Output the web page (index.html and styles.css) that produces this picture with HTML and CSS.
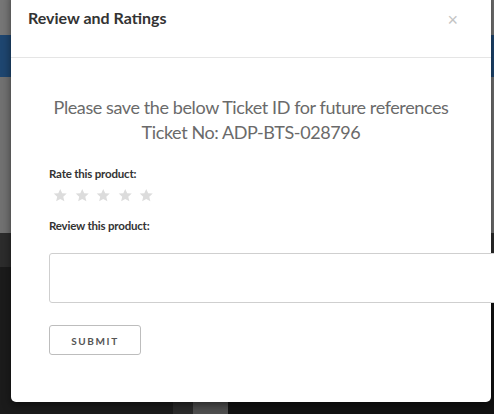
FILE: index.html
```html
<!DOCTYPE html>
<html lang="en">
<head>
<meta charset="utf-8">
<title>Review and Ratings</title>
<link rel="stylesheet" href="styles.css">
</head>
<body>
<div class="backdrop">
  <div class="band band-top"></div>
  <div class="band band-blue"></div>
  <div class="band band-mid"></div>
  <div class="band band-dark"></div>
  <div class="band band-bottom"></div>
</div>
<div class="modal">
  <div class="modal-header">
    <h4 class="modal-title">Review and Ratings</h4>
    <span class="close">&times;</span>
  </div>
  <div class="modal-body">
    <p class="message">Please save the below Ticket ID for future references<br>Ticket No: ADP-BTS-028796</p>
    <label class="field-label">Rate this product:</label>
    <div class="stars">
      <svg class="star" viewBox="0 0 24 24"><path d="M12 1.5l3.2 7.1 7.6.7-5.8 5.1 1.8 7.6L12 18l-6.8 4 1.8-7.6L1.2 9.3l7.6-.7z"/></svg>
      <svg class="star" viewBox="0 0 24 24"><path d="M12 1.5l3.2 7.1 7.6.7-5.8 5.1 1.8 7.6L12 18l-6.8 4 1.8-7.6L1.2 9.3l7.6-.7z"/></svg>
      <svg class="star" viewBox="0 0 24 24"><path d="M12 1.5l3.2 7.1 7.6.7-5.8 5.1 1.8 7.6L12 18l-6.8 4 1.8-7.6L1.2 9.3l7.6-.7z"/></svg>
      <svg class="star" viewBox="0 0 24 24"><path d="M12 1.5l3.2 7.1 7.6.7-5.8 5.1 1.8 7.6L12 18l-6.8 4 1.8-7.6L1.2 9.3l7.6-.7z"/></svg>
      <svg class="star" viewBox="0 0 24 24"><path d="M12 1.5l3.2 7.1 7.6.7-5.8 5.1 1.8 7.6L12 18l-6.8 4 1.8-7.6L1.2 9.3l7.6-.7z"/></svg>
    </div>
    <label class="field-label review-label">Review this product:</label>
    <textarea class="review-input"></textarea>
    <button class="submit-btn">SUBMIT</button>
  </div>
</div>
</body>
</html>
```
FILE: styles.css
```css
html, body {
  margin: 0;
  padding: 0;
  height: 100%;
  overflow: hidden;
}
body {
  font-family: "Lato", "Liberation Sans", sans-serif;
  background: #151515;
}
.backdrop {
  display: flex;
  flex-direction: column;
  height: 414px;
}
.band-top { height: 35px; background: #767676; }
.band-blue { height: 42px; background: #1e4670; }
.band-mid { height: 156px; background: #717171; }
.band-dark { height: 34px; background: #2c2c2c; }
.band-bottom {
  flex: 1;
  background: linear-gradient(90deg, #1b1b1b 0, #1b1b1b 173px, #2a2a2a 173px, #2a2a2a 193px, #4e4e4e 193px, #4e4e4e 228px, #121212 228px);
}
.modal {
  position: absolute;
  left: 11px;
  top: -10px;
  width: 480px;
  background: #fff;
  border-radius: 5px;
  box-shadow: 0 3px 8px rgba(0,0,0,0.5);
}
.modal-header {
  display: flex;
  align-items: flex-start;
  justify-content: space-between;
  padding: 17px 33px 28px 17px;
  border-bottom: 1px solid #e5e5e5;
}
.modal-title {
  margin: 0;
  font-size: 16px;
  line-height: 22px;
  font-weight: 700;
  color: #333;
}
.close {
  font-size: 18px;
  line-height: 16px;
  color: #c4c4c4;
  font-family: "Liberation Sans", sans-serif;
  margin-top: 5px;
}
.modal-body {
  display: flex;
  flex-direction: column;
  align-items: flex-start;
  padding: 37px 0 47px 38px;
}
.message {
  align-self: stretch;
  margin: 0 38px 21px 0;
  text-align: center;
  font-family: "Lato", sans-serif;
  font-size: 18px;
  line-height: 25px;
  font-weight: 400;
  letter-spacing: -0.4px;
  color: #6a6a6a;
  white-space: nowrap;
}
.field-label {
  font-size: 11.5px;
  line-height: 16px;
  font-weight: 700;
  color: #333;
  letter-spacing: -0.2px;
}
.stars {
  display: flex;
  gap: 7px;
  margin: 6px 0 15px 4px;
}
.star {
  width: 14.5px;
  height: 14.5px;
  fill: #dcdcdc;
}
.review-input {
  margin-top: 19px;
  width: 470px;
  height: 50px;
  box-sizing: border-box;
  border: 1px solid #cfcfcf;
  border-radius: 3px;
  resize: none;
  padding: 6px 10px;
  font-family: inherit;
  background: #fff;
}
.submit-btn {
  margin-top: 22px;
  width: 92px;
  height: 30px;
  box-sizing: border-box;
  border: 1px solid #bdbdbd;
  border-radius: 3px;
  background: #fff;
  font-family: "Lato", sans-serif;
  font-size: 10px;
  font-weight: 700;
  letter-spacing: 1.6px;
  color: #555;
  padding: 2px 0 0;
}
```
